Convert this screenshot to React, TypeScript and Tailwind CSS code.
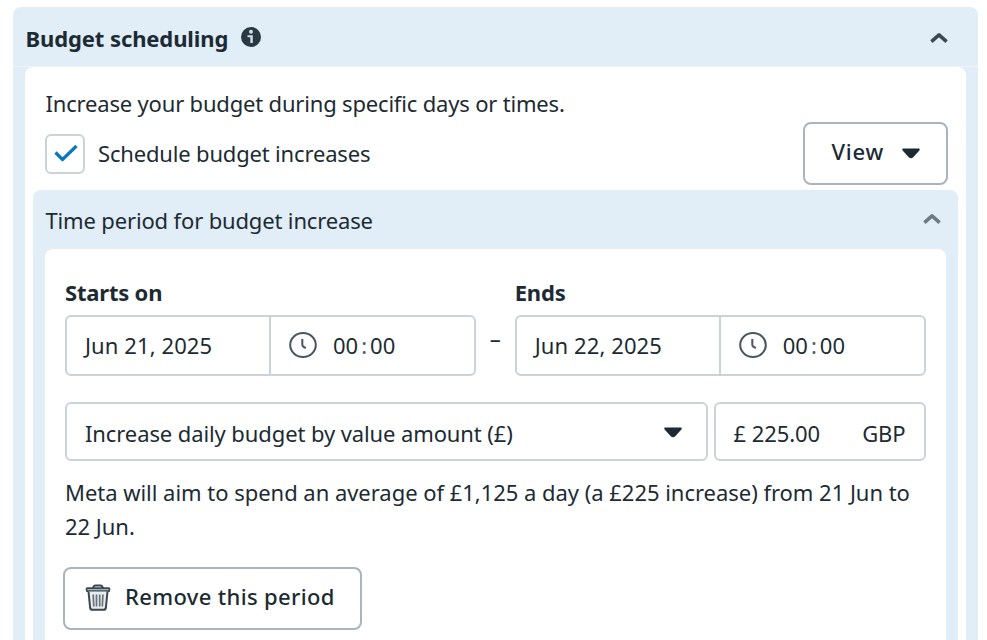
import type { ReactNode } from 'react';

function ChevronUp({ className }: { className: string }) {
  return (
    <svg viewBox="0 0 18 12" className={`h-3 w-[18px] ${className}`} fill="none" stroke="currentColor" strokeWidth="3.6">
      <path d="M1.4 9.600 9 2.900l7.600 6.700" strokeLinejoin="round" />
    </svg>
  );
}

function Caret() {
  return (
    <svg viewBox="0 0 18 11" className="h-[11px] w-[18px] text-[#1c2b33]" fill="currentColor">
      <path d="M1.2.5h15.6q1.2 0 .9 1.2-.2.8-1 1.6L11 9.400Q9 11 7 9.400L1.300 3.300Q.5 2.500.3 1.700 0 .5 1.200.5Z" />
    </svg>
  );
}

function Info() {
  return (
    <svg viewBox="0 0 20 20" className="size-5">
      <circle cx="10" cy="10" r="10" fill="#283943" />
      <circle cx="10" cy="4.800" r="2" fill="#d3dfe8" />
      <path d="M6.500 8.300h5.300v7.700H9.300v-5.800H6.500Z" fill="#d3dfe8" />
    </svg>
  );
}

function Clock() {
  return (
    <svg viewBox="0 0 28 26" className="h-[26px] w-7" fill="none" stroke="#465660" strokeWidth="2">
      <ellipse cx="14" cy="13" rx="12.800" ry="11.900" />
      <path d="M13.300 7v5.400q0 1.400 1 2.200l2.500 1.600" />
    </svg>
  );
}

function Trash() {
  return (
    <svg viewBox="0 0 26 27" className="h-[27px] w-[26px]" fill="none" stroke="#394850">
      <path d="M8 4.500Q8.500 1.500 10.500 1.500h5Q17.500 1.500 18 4.500" strokeWidth="1.800" />
      <path d="M2.500 4.200h21q1.300 0 1 1.300l-.5 1.700H2l-.5-1.700q-.3-1.300 1-1.300Z" strokeWidth="1.700" fill="#aeb6ba" />
      <path d="m3.500 7.500 1.600 16q.3 2.300 2.300 2.300h11.200q2 0 2.300-2.300l1.600-16" strokeWidth="2" fill="#e9ecee" />
      <path d="m8.200 10.500.6 12M11.500 10.500v12M14.700 10.500v12M17.900 10.500l-.6 12" strokeWidth="1.700" stroke="#66747c" />
    </svg>
  );
}

function DateTime({ label, date }: { label: string; date: string }) {
  return (
    <div className="w-[411px]">
      <div className="h-8 text-[22px] leading-[30px] font-bold tracking-[-0.2px]">{label}</div>
      <div className="mt-[6px] flex h-[61px] rounded-md border-2 border-[#cbd2d9]">
        <div className="flex w-[204px] items-center border-r-2 border-[#cbd2d9] pb-[2px] pl-[18px] tracking-[0.1px]">
          {date}
        </div>
        <div className="flex items-center pb-[2px] pl-[18px]">
          <Clock />
          <span className="ml-4">00</span>
          <span className="mx-[3px] text-[#52606a]">:</span>
          <span>00</span>
        </div>
      </div>
    </div>
  );
}

function Button({ className, children }: { className: string; children: ReactNode }) {
  return (
    <button className={`flex items-center rounded-lg border-2 border-[#a8b4c0] bg-white font-medium ${className}`}>
      {children}
    </button>
  );
}

export default function App() {
  return (
    <div className="h-[640px] w-[987px] overflow-hidden bg-white pt-[7px] pl-[13px] font-['Noto_Sans','Open_Sans',sans-serif] text-[22px] leading-[34px] text-[#1c2b33]">
      <section className="h-[700px] w-[964.500px] rounded-t-lg bg-[#e1edf7]">
        <header className="flex h-[60px] items-center border-b border-[#edf5fb] pt-1 pr-[30px] pl-[12.500px]">
          <h2 className="mb-[2px] text-[22px] font-bold tracking-[-0.1px]">Budget scheduling</h2>
          <span className="mb-1 ml-[13px]">
            <Info />
          </span>
          <span className="mb-[2px] ml-auto">
            <ChevronUp className="text-[#3a4952]" />
          </span>
        </header>

        <div className="mx-3 h-[700px] rounded-t-lg bg-white pt-[19px]">
          <p className="pl-[20.500px] tracking-[-0.18px]">Increase your budget during specific days or times.</p>
          <div className="mt-[2px] flex h-[63px] items-center justify-between pr-[18px] pl-5">
            <label className="flex items-center">
              <span className="flex size-10 items-center justify-center rounded-md border-2 border-[#cbd2d9]">
                <svg viewBox="0 0 24 18" className="mb-[2px] ml-[2px] h-[18px] w-6" fill="none" stroke="#0a78be" strokeWidth="3.2">
                  <path d="m1.500 8.500 7 7L22.500 2" strokeLinejoin="round" />
                </svg>
              </span>
              <span className="mb-[2px] ml-[13px] tracking-[-0.17px]">Schedule budget increases</span>
            </label>
            <Button className="h-[63px] w-[145px] pl-[27px]">
              <span className="pb-[6px] tracking-[0.8px]">View</span>
              <span className="ml-[18px]">
                <Caret />
              </span>
            </Button>
          </div>

          <section className="mx-2 mt-[5px] h-[600px] rounded-t-lg bg-[#e1edf7]">
            <header className="flex h-[59px] items-center justify-between pt-1 pr-[17px] pl-[12.500px]">
              <h3 className="mb-1 tracking-[-0.15px]">Time period for budget increase</h3>
              <span className="mb-[6px]">
                <ChevronUp className="text-[#6b7a84]" />
              </span>
            </header>

            <div className="mx-3 h-[600px] rounded-t-lg bg-white px-5 pt-7">
              <div className="flex">
                <DateTime label="Starts on" date="Jun 21, 2025" />
                <span className="w-[39px] pt-[44px] text-center">–</span>
                <DateTime label="Ends" date="Jun 22, 2025" />
              </div>

              <div className="mt-[26px] flex gap-[6px]">
                <div className="flex h-[59px] w-[643px] items-center justify-between rounded-md border-2 border-[#cbd2d9] pr-6 pl-[18px] tracking-[-0.1px]">
                  <span className="pt-[2px]">Increase daily budget by value amount (£)</span>
                  <span className="pt-[2px]">
                    <Caret />
                  </span>
                </div>
                <div className="flex h-[59px] w-[212px] items-center justify-between rounded-md border-2 border-[#cbd2d9] pt-[2px] pr-[18px] pl-[18px] tracking-[-0.1px]">
                  <span>£ 225.00</span>
                  <span>GBP</span>
                </div>
              </div>

              <p className="mt-[14px] tracking-[-0.03px] whitespace-nowrap">
                Meta will aim to spend an average of £1,125 a day (a £225 increase) from 21 Jun to
                <br />
                22 Jun.
              </p>

              <Button className="mt-6 -ml-[2px] h-[63px] w-[299px] pl-5">
                <span className="pb-[2px]">
                  <Trash />
                </span>
                <span className="ml-[14px] pb-[6px] tracking-[0.35px] whitespace-nowrap">Remove this period</span>
              </Button>
            </div>
          </section>
        </div>
      </section>
    </div>
  );
}
